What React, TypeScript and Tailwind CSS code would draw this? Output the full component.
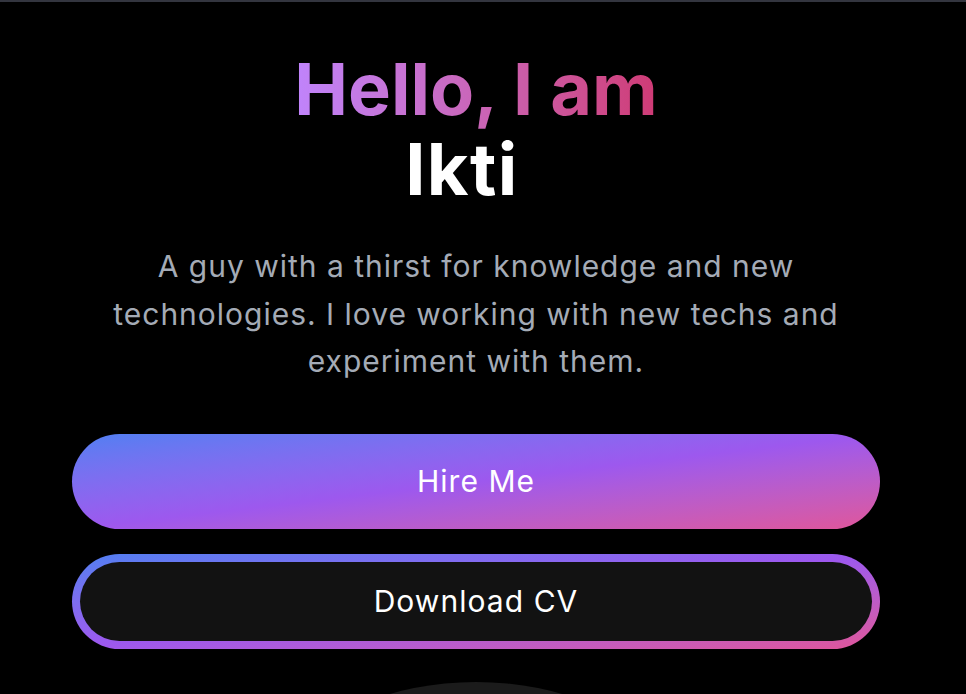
export default function App() {
  return (
    <div
      className="min-h-screen overflow-hidden bg-black border-t-2 border-[#33353f]"
      style={{ fontFamily: "Inter, 'Noto Sans', sans-serif" }}
    >
      <div className="w-[952px] flex flex-col items-center px-[72px] pt-[47px]">
        <h1 className="text-[72px] leading-[80px] font-bold text-center">
          <span className="block bg-linear-to-r from-[#c084fc] to-[#cf3a75] bg-clip-text text-transparent">
            Hello, I am
          </span>
          <span className="block text-white tracking-[0.02em]">
            Ikti
            <span className="inline-block w-[28px]" />
          </span>
        </h1>

        <p className="mt-[34px] max-w-3xl text-center text-[30px] leading-[47.5px] tracking-[0.033em] text-[#a4abb6]">
          A guy with a thirst for knowledge and new technologies. I love working with new techs and
          experiment with them.
        </p>

        <div className="mt-12 w-full flex flex-col gap-[25px]">
          <button className="h-[95px] w-full rounded-full bg-linear-to-br from-[#4f7ff2] via-[#9d58ee] to-[#e0559a] text-[30px] tracking-[0.035em] text-white">
            Hire Me
          </button>
          <div className="h-[95px] w-full rounded-full bg-linear-to-br from-[#4f7ff2] via-[#9d58ee] to-[#e0559a] p-2">
            <button className="h-full w-full rounded-full bg-[#121212] text-[30px] tracking-[0.035em] text-white">
              Download CV
            </button>
          </div>
        </div>

        <div className="mt-[33px] w-[636px] h-[636px] shrink-0 rounded-full bg-[#1b1b1b]" />
      </div>
    </div>
  );
}
